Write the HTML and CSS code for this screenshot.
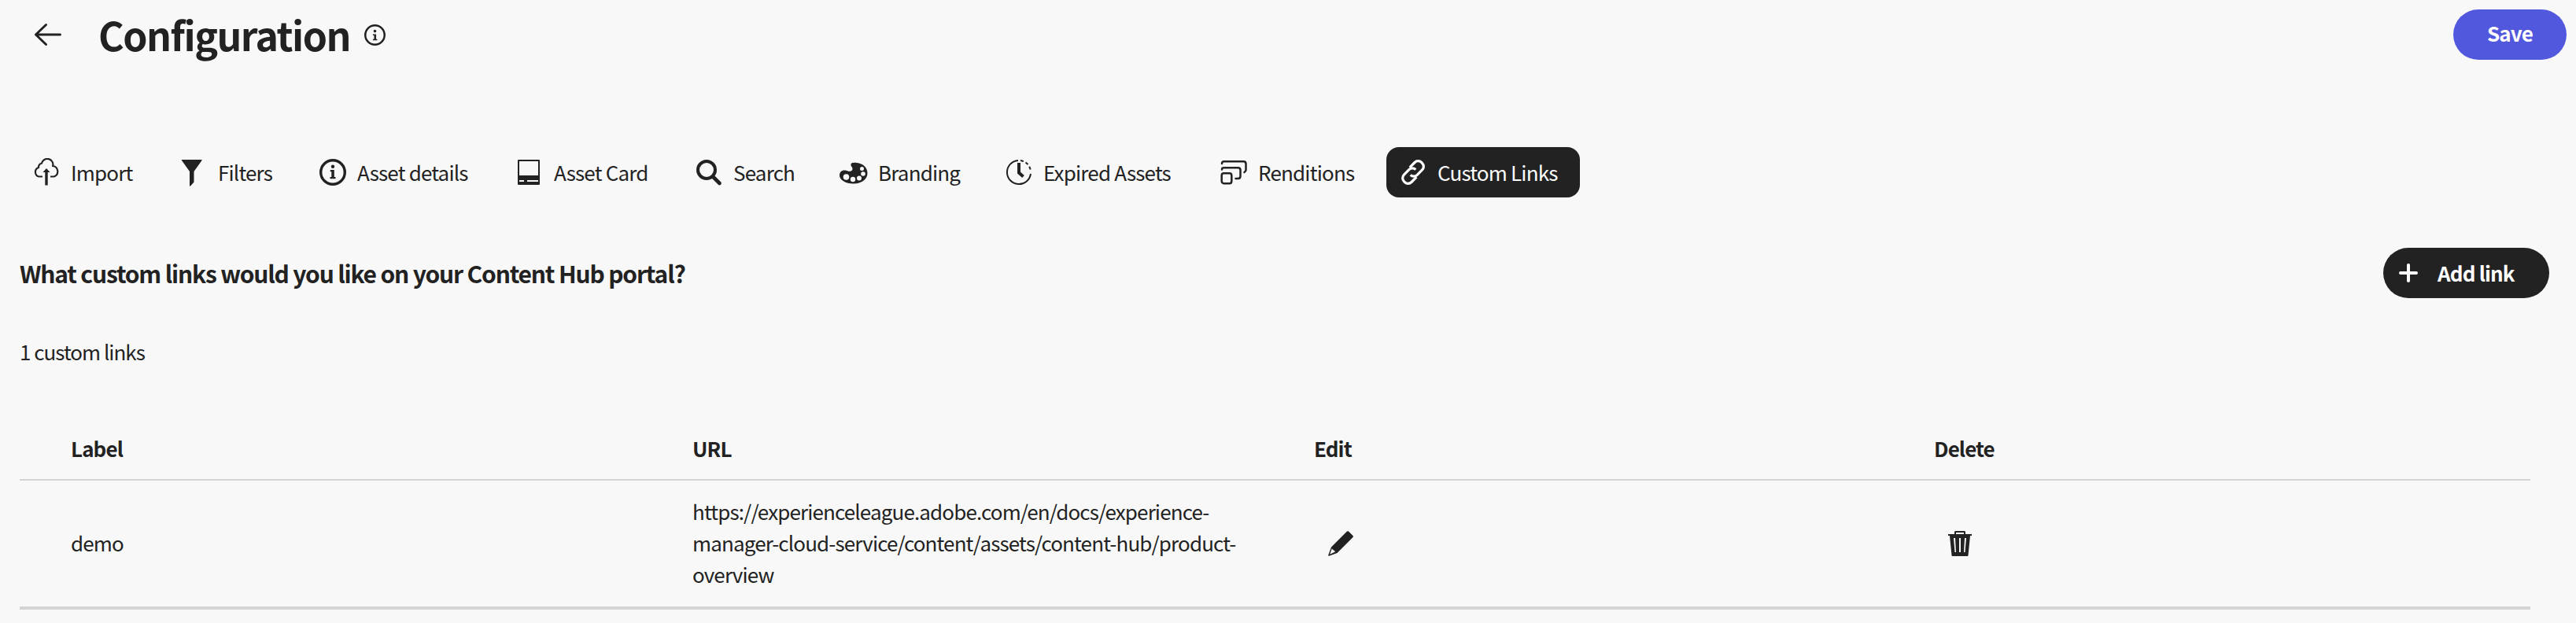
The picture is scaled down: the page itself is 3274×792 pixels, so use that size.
FILE: index.html
```html
<!DOCTYPE html>
<html lang="en">
<head>
<meta charset="utf-8">
<title>Configuration</title>
<link rel="stylesheet" href="styles.css">
</head>
<body>
<header class="topbar">
  <svg class="back" viewBox="0 0 36 30" fill="none" stroke="currentColor" stroke-width="3" stroke-linecap="round" stroke-linejoin="round"><path d="M33.500 15H2.500M15.500 2.500L2.500 15l13 12.500"/></svg>
  <h1 class="title">Configuration</h1>
  <svg class="info" viewBox="0 0 26 26"><circle cx="13" cy="13" r="11.800" fill="none" stroke="currentColor" stroke-width="2.400"/><circle cx="13" cy="8.300" r="1.700" fill="currentColor"/><path d="M10.500 12h4v6h1.300v1.500h-5.300V18h1.500v-4.500h-1.500z" fill="currentColor"/></svg>
  <button class="btn save">Save</button>
</header>

<nav class="tabs">
  <a class="tab import"><svg viewBox="0 0 36 36"><path d="M12.500 23.500H8a6 6 0 0 1-.5-11.500 5.500 5.500 0 0 1 4-5.500 7.300 7.300 0 0 1 14.200 3.500 7 7 0 0 1 1.500 13.500H22.500" transform="translate(.5 0)" fill="none" stroke="currentColor" stroke-width="2.200"/><path d="M18 13l4.500 5h-2.800V34.500h-3.400V18h-2.800z" fill="currentColor"/></svg><span>Import</span></a>
  <a class="tab filters"><svg viewBox="0 0 36 36"><path d="M3.500 2h24.500a.6.6 0 0 1 .5 1L18.500 17v13.500L14 35.500a.6.6 0 0 1-1-.5V17L3 3A.6.6 0 0 1 3.500 2z" fill="currentColor"/></svg><span>Filters</span></a>
  <a class="tab details"><svg viewBox="0 0 36 36"><circle cx="18" cy="18" r="15.300" fill="none" stroke="currentColor" stroke-width="3.400"/><circle cx="18" cy="10.800" r="2.200" fill="currentColor"/><path d="M14.800 15h5v9h1.700v2.200h-7V24h1.800v-6.800h-1.500z" fill="currentColor"/></svg><span>Asset details</span></a>
  <a class="tab card"><svg viewBox="0 0 36 36"><path fill="currentColor" fill-rule="evenodd" d="M4 2h26a1 1 0 0 1 1 1v30a1 1 0 0 1-1 1H4a1 1 0 0 1-1-1V3a1 1 0 0 1 1-1zM5 4v18h24V4zM5 28v2h6v-2zM15 28v2h14v-2z"/></svg><span>Asset Card</span></a>
  <a class="tab search"><svg viewBox="0 0 36 36" fill="none" stroke="currentColor"><circle cx="15" cy="15" r="11" stroke-width="4"/><path d="M23 23.500l8.500 8.500" stroke-width="4.600" stroke-linecap="round"/></svg><span>Search</span></a>
  <a class="tab branding"><svg viewBox="0 0 36 36"><path fill="currentColor" d="M14.500 8.500C14 6 18 5.500 22 6c8 .8 13.500 6 13.500 13 0 8-7.500 13.500-17.500 13.500C7.500 32.500 0 27.500 0 22c0-5 3.500-7 7-6.500 3 .4 4.500 1.800 7 1.200 3-.8 3.200-4.200 1.200-6a3.500 3.500 0 0 1-.7-2.200z"/><g fill="#f8f8f8"><circle cx="8.500" cy="24" r="3.800"/><circle cx="17" cy="27" r="3.200"/><circle cx="25" cy="25.500" r="3"/><circle cx="30" cy="20" r="2.800"/><circle cx="28.500" cy="13.500" r="2.500"/></g></svg><span>Branding</span></a>
  <a class="tab expired"><svg viewBox="0 0 36 36" fill="none" stroke="currentColor"><path d="M17 2.900A15.100 15.100 0 1 0 33 20" stroke-width="2"/><path d="M20 3A15.100 15.100 0 0 1 33 17" stroke-width="2" stroke-dasharray="4 3"/><path d="M18 6v12.500l5.500 5" stroke-width="4"/></svg><span>Expired Assets</span></a>
  <a class="tab renditions"><svg viewBox="0 0 36 36" fill="none" stroke="currentColor" stroke-width="2.500" stroke-linecap="round"><rect x="2.700" y="19.200" width="12.600" height="13" rx="2.700"/><path d="M3 14.500c0-1.500 1-2.200 2.500-2.200H23.500c2 0 3 1 3 3V23c0 2-1 3-3 3H20.500"/><path d="M3 7c0-1.800 1-2.700 2.500-2.700H30.500c2 0 3 1 3 3V15c0 1.300-.8 2.300-2 3"/></svg><span>Renditions</span></a>
  <a class="tab links active"><svg viewBox="-1 -1 38 38" fill="none" stroke="currentColor" stroke-width="3.400"><path d="M13.500 11.500l6.700-6.700a6.300 6.300 0 0 1 9 0l1 1a6.300 6.300 0 0 1 0 9l-6.700 6.700a6.300 6.300 0 0 1-9 0"/><path d="M22.500 24.500l-6.700 6.700a6.300 6.300 0 0 1-9 0l-1-1a6.300 6.300 0 0 1 0-9l6.700-6.700a6.300 6.300 0 0 1 9 0"/></svg><span>Custom Links</span></a>
</nav>

<main class="content">
  <div class="heading-row">
    <h2 class="question">What custom links would you like on your Content Hub portal?</h2>
    <button class="btn add"><svg viewBox="0 0 24 24" stroke="currentColor" stroke-width="4" stroke-linecap="round"><path d="M12 2v20M2 12h20"/></svg><span>Add link</span></button>
  </div>
  <p class="count">1 custom links</p>
  <section class="table">
    <div class="row head"><span>Label</span><span>URL</span><span>Edit</span><span>Delete</span></div>
    <div class="row item">
      <span class="text">demo</span>
      <span class="text">https://experienceleague.adobe.com/en/docs/experience-<br>manager-cloud-service/content/assets/content-hub/product-<br>overview</span>
      <span><svg class="pencil" viewBox="0 0 32 32"><path fill="currentColor" fill-rule="evenodd" d="M24 .6a1.500 1.500 0 0 1 2 0l5.500 5.500a1.500 1.500 0 0 1 0 2L11.500 28 1.200 31.800a.8.800 0 0 1-1-1L4 20.500zM4.700 22.500l-2.500 7.300 7-3.500z"/></svg></span>
      <span><svg class="trash" viewBox="0 0 30 32"><path fill="currentColor" fill-rule="evenodd" d="M8 4V1.500C8 .6 8.600 0 9.500 0h11c.9 0 1.500.6 1.500 1.500V4h8v2h-2l-2.500 25a1 1 0 0 1-1 1h-19a1 1 0 0 1-1-1L2 6H0V4zM10 2v2h10V2zM7 9l1.500 18H10L9 9zM14 9v18h2V9zM21 9l-1 18h1.500L23 9z"/></svg></span>
    </div>
  </section>
</main>
</body>
</html>
```
FILE: styles.css
```css
* { box-sizing: border-box; }

body {
  margin: 0;
  height: 792px;
  overflow: hidden;
  background: #f8f8f8;
  color: #222;
  font-family: "Noto Sans CJK SC", "Noto Sans", sans-serif;
  font-size: 26px;
  line-height: 40px;
  letter-spacing: -0.9px;
}

svg { display: block; flex: none; }
h1, h2, p { margin: 0; }

.topbar {
  display: flex;
  align-items: center;
  height: 88px;
  padding: 0 12px 0 43px;
}
.back { width: 36px; height: 30px; }
.title {
  width: 320px;
  margin-left: 46px;
  padding-bottom: 2px;
  font-size: 50px;
  line-height: 60px;
  letter-spacing: -1.55px;
  white-space: nowrap;
}
.info { width: 27px; height: 27px; margin-left: 18px; }

.btn {
  display: flex;
  align-items: center;
  height: 64px;
  border: 0;
  border-radius: 32px;
  color: #fff;
  font: 700 26px/40px "Noto Sans CJK SC", "Noto Sans", sans-serif;
  letter-spacing: -0.85px;
  white-space: nowrap;
}
.save {
  width: 144px;
  margin: 0 0 0 auto;
  padding: 0 0 5px;
  justify-content: center;
  background: #5258de;
}

.tabs {
  display: flex;
  height: 64px;
  margin-top: 99px;
  padding-left: 24px;
  letter-spacing: -0.82px;
}
.tab {
  display: flex;
  align-items: center;
  gap: 13px;
  flex: none;
  padding-left: 17px;
  border-radius: 16px;
  white-space: nowrap;
}
.tab svg { width: 36px; height: 36px; }
.tab span { padding-bottom: 1px; }
.import { width: 187px; }
.filters { width: 177px; }
.details { width: 250px; }
.card { width: 228px; }
.search { width: 184px; }
.branding { width: 210px; }
.expired { width: 273px; }
.renditions { width: 229px; }
.links { width: 246px; padding-left: 16px; }
.active { background: #222; color: #fff; }

.content { padding: 0 34px 0 25px; }
.heading-row {
  display: flex;
  align-items: center;
  justify-content: space-between;
  margin-top: 64px;
}
.question {
  padding-bottom: 1px;
  font-size: 30px;
  line-height: 44px;
  letter-spacing: -1.18px;
  white-space: nowrap;
}
.add { width: 211px; padding: 0 0 0 20px; gap: 25px; background: #222; }
.add svg { width: 24px; height: 24px; }
.count { margin-top: 48px; letter-spacing: -1px; }

.table { width: 3191px; margin-top: 73px; }
.row {
  display: grid;
  grid-template-columns: 790px 790px 788px 1fr;
  align-items: center;
  padding-left: 65px;
}
.head {
  height: 71px;
  padding-bottom: 9px;
  border-bottom: 2px solid #d4d4d4;
  font-weight: 700;
}
.item { height: 164px; border-bottom: 4px solid #d4d4d4; }
.text {
  padding-bottom: 2px;
  letter-spacing: -0.87px;
  white-space: nowrap;
}
.pencil { width: 32px; height: 32px; margin-left: 18px; }
.trash { width: 30px; height: 32px; margin-left: 18px; }
```
